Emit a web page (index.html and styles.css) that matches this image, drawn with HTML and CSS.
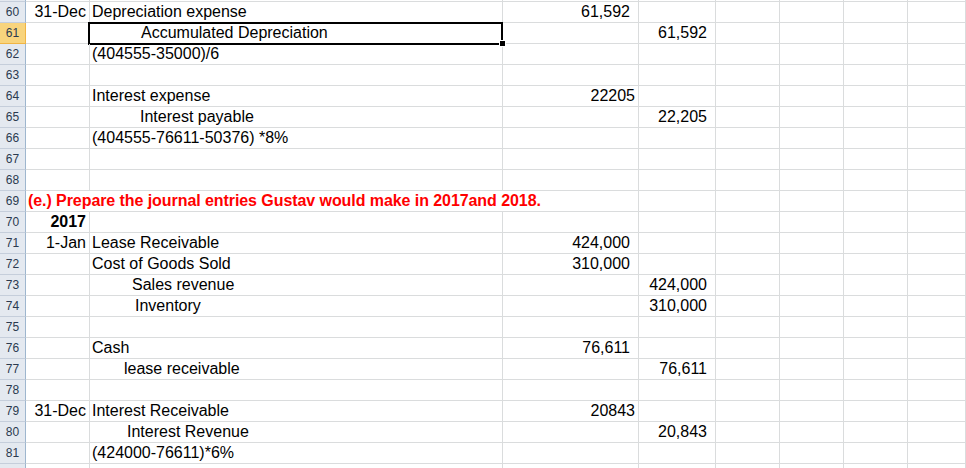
FILE: index.html
```html
<!DOCTYPE html>
<html>
<head>
<meta charset="utf-8">
<link rel="stylesheet" href="styles.css">
</head>
<body>
<div class="sheet">
  <div class="rh top"></div><div class="c top"></div><div class="c top"></div><div class="c top"></div><div class="c top"></div><div class="c top"></div><div class="c top"></div><div class="c top"></div><div class="c top"></div>

  <div class="rh">60</div><div class="c r">31-Dec</div><div class="c">Depreciation expense</div><div class="c r acct">61,592</div><div class="c"></div><div class="c"></div><div class="c"></div><div class="c"></div><div class="c"></div>

  <div class="rh sel">61</div><div class="c"></div><div class="c active i51">Accumulated Depreciation</div><div class="c"></div><div class="c r acct">61,592</div><div class="c"></div><div class="c"></div><div class="c"></div><div class="c"></div>

  <div class="rh">62</div><div class="c"></div><div class="c">(404555-35000)/6</div><div class="c"></div><div class="c"></div><div class="c"></div><div class="c"></div><div class="c"></div><div class="c"></div>

  <div class="rh">63</div><div class="c"></div><div class="c"></div><div class="c"></div><div class="c"></div><div class="c"></div><div class="c"></div><div class="c"></div><div class="c"></div>

  <div class="rh">64</div><div class="c"></div><div class="c">Interest expense</div><div class="c r">22205</div><div class="c"></div><div class="c"></div><div class="c"></div><div class="c"></div><div class="c"></div>

  <div class="rh">65</div><div class="c"></div><div class="c i50">Interest payable</div><div class="c"></div><div class="c r acct">22,205</div><div class="c"></div><div class="c"></div><div class="c"></div><div class="c"></div>

  <div class="rh">66</div><div class="c"></div><div class="c">(404555-76611-50376) *8%</div><div class="c"></div><div class="c"></div><div class="c"></div><div class="c"></div><div class="c"></div><div class="c"></div>

  <div class="rh">67</div><div class="c"></div><div class="c"></div><div class="c"></div><div class="c"></div><div class="c"></div><div class="c"></div><div class="c"></div><div class="c"></div>

  <div class="rh">68</div><div class="c"></div><div class="c"></div><div class="c"></div><div class="c"></div><div class="c"></div><div class="c"></div><div class="c"></div><div class="c"></div>

  <div class="rh">69</div><div class="c span3 heading">(e.) Prepare the journal entries Gustav would make in 2017and 2018.</div><div class="c"></div><div class="c"></div><div class="c"></div><div class="c"></div><div class="c"></div>

  <div class="rh">70</div><div class="c r bold">2017</div><div class="c"></div><div class="c"></div><div class="c"></div><div class="c"></div><div class="c"></div><div class="c"></div><div class="c"></div>

  <div class="rh">71</div><div class="c r">1-Jan</div><div class="c">Lease Receivable</div><div class="c r acct">424,000</div><div class="c"></div><div class="c"></div><div class="c"></div><div class="c"></div><div class="c"></div>

  <div class="rh">72</div><div class="c"></div><div class="c">Cost of Goods Sold</div><div class="c r acct">310,000</div><div class="c"></div><div class="c"></div><div class="c"></div><div class="c"></div><div class="c"></div>

  <div class="rh">73</div><div class="c"></div><div class="c i42">Sales revenue</div><div class="c"></div><div class="c r acct">424,000</div><div class="c"></div><div class="c"></div><div class="c"></div><div class="c"></div>

  <div class="rh">74</div><div class="c"></div><div class="c i45">Inventory</div><div class="c"></div><div class="c r acct">310,000</div><div class="c"></div><div class="c"></div><div class="c"></div><div class="c"></div>

  <div class="rh">75</div><div class="c"></div><div class="c"></div><div class="c"></div><div class="c"></div><div class="c"></div><div class="c"></div><div class="c"></div><div class="c"></div>

  <div class="rh">76</div><div class="c"></div><div class="c">Cash</div><div class="c r acct">76,611</div><div class="c"></div><div class="c"></div><div class="c"></div><div class="c"></div><div class="c"></div>

  <div class="rh">77</div><div class="c"></div><div class="c i34">lease receivable</div><div class="c"></div><div class="c r acct">76,611</div><div class="c"></div><div class="c"></div><div class="c"></div><div class="c"></div>

  <div class="rh">78</div><div class="c"></div><div class="c"></div><div class="c"></div><div class="c"></div><div class="c"></div><div class="c"></div><div class="c"></div><div class="c"></div>

  <div class="rh">79</div><div class="c r">31-Dec</div><div class="c">Interest Receivable</div><div class="c r">20843</div><div class="c"></div><div class="c"></div><div class="c"></div><div class="c"></div><div class="c"></div>

  <div class="rh">80</div><div class="c"></div><div class="c i38">Interest Revenue</div><div class="c"></div><div class="c r acct">20,843</div><div class="c"></div><div class="c"></div><div class="c"></div><div class="c"></div>

  <div class="rh">81</div><div class="c"></div><div class="c">(424000-76611)*6%</div><div class="c"></div><div class="c"></div><div class="c"></div><div class="c"></div><div class="c"></div><div class="c"></div>

  <div class="rh"></div><div class="c"></div><div class="c"></div><div class="c"></div><div class="c"></div><div class="c"></div><div class="c"></div><div class="c"></div><div class="c"></div>
</div>
</body>
</html>
```

FILE: styles.css
```css
html, body {
  margin: 0;
  padding: 0;
  background: #ffffff;
  height: 468px;
  overflow: hidden;
}

.sheet {
  display: grid;
  grid-template-columns: 26px 64px 413px 136px 77px 64px 64px 64px 1fr;
  grid-template-rows: 2px;
  grid-auto-rows: 21px;
  width: 966px;
  font-family: "Liberation Sans", Arial, sans-serif;
  font-size: 16px;
  color: #000000;
}

.c {
  box-sizing: border-box;
  border-right: 1px solid #dadcdd;
  border-bottom: 1px solid #dadcdd;
  line-height: 20px;
  padding: 0 2px;
  white-space: pre;
  overflow: visible;
  position: relative;
}

.rh {
  box-sizing: border-box;
  background: #e4e9f0;
  border-right: 1px solid #9eb6ce;
  border-bottom: 1px solid #c5cedb;
  font-size: 12px;
  line-height: 20px;
  text-align: center;
  color: #2b3a4f;
  font-family: "Liberation Sans", Arial, sans-serif;
}

.rh.sel {
  background: #f8d47d;
  border-bottom-color: #f0b545;
  border-right-color: #f0b545;
}

.top {
  padding: 0;
  line-height: 0;
}

.r { text-align: right; }
.acct { padding-right: 8px; }
.c.r:not(.acct) { padding-right: 3px; }
.bold { font-weight: bold; }

.span3 {
  grid-column: span 3;
}

.heading {
  color: #ff0000;
  font-weight: bold;
  letter-spacing: -0.07px;
}

.i34 { padding-left: 34px; }
.i38 { padding-left: 37px; }
.i42 { padding-left: 42px; }
.i45 { padding-left: 45px; }
.i50 { padding-left: 50px; }
.i51 { padding-left: 51px; }

.active::after {
  content: "";
  position: absolute;
  left: -2px;
  top: -1px;
  right: -1px;
  bottom: -2px;
  border: 2px solid #000000;
  pointer-events: none;
}

.active::before {
  content: "";
  position: absolute;
  right: -3px;
  bottom: -3px;
  width: 5px;
  height: 5px;
  background: #000000;
  outline: 1px solid #ffffff;
  z-index: 2;
}
```
